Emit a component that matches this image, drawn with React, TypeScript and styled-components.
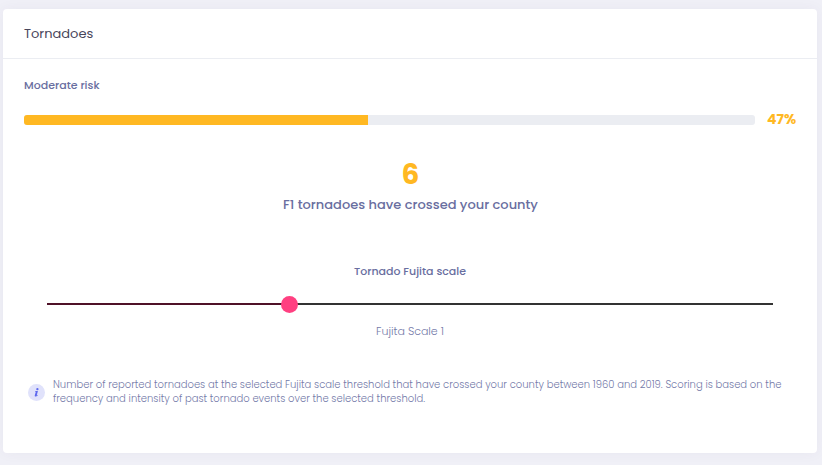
import React, { useState } from "react";
import styled, { createGlobalStyle } from "styled-components";

const GlobalStyle = createGlobalStyle`
  *, *::before, *::after { box-sizing: border-box; }
  body {
    margin: 0;
    background: #f0f0f7;
    font-family: Poppins, Inter, sans-serif;
    color: #696ea0;
  }
`;

const Page = styled.main`
  padding: 9px 5px 12px 3px;
`;

const Card = styled.section`
  background: #fff;
  border-radius: 4px;
  box-shadow: 0 0 13px rgba(82, 63, 105, 0.05);
`;

const CardHeader = styled.header`
  padding: 15px 21px 14px;
  border-bottom: 1px solid #ebedf2;
`;

const Title = styled.h2`
  margin: 0;
  font-size: 13px;
  line-height: 20px;
  font-weight: 400;
  color: #48465b;
`;

const CardBody = styled.div`
  padding: 16px 20px 47px 21px;
`;

const RiskLabel = styled.p`
  margin: 0 0 12px;
  font-size: 11px;
  line-height: 20px;
  font-weight: 500;
`;

const RiskRow = styled.div`
  display: flex;
  align-items: center;
  gap: 12px;
`;

const Meter = styled.div`
  flex: 1;
  height: 10px;
  border-radius: 3px;
  background: #ebedf2;
  overflow: hidden;
`;

const MeterFill = styled.div`
  height: 100%;
  background: #ffb822;
`;

const Percent = styled.span`
  width: 30px;
  padding-bottom: 2px;
  font-size: 14px;
  line-height: 24px;
  font-weight: 700;
  color: #ffb822;
`;

const Summary = styled.div`
  padding-top: 22px;
  text-align: center;
`;

const Count = styled.div`
  font-size: 28px;
  line-height: 40px;
  font-weight: 700;
  color: #ffb822;
`;

const CountCaption = styled.p`
  margin: 0;
  font-size: 13px;
  line-height: 20px;
  font-weight: 500;
`;

const ScaleGroup = styled.div`
  display: flex;
  flex-direction: column;
  padding: 46px 24px 0 23px;
  text-align: center;
`;

const ScaleLabel = styled.label`
  font-size: 11px;
  line-height: 20px;
  font-weight: 500;
`;

const Slider = styled.input<{ $filled: number }>`
  appearance: none;
  width: 100%;
  height: 18px;
  margin: 14px 0 8px;
  background: transparent;
  cursor: pointer;

  &::-webkit-slider-runnable-track {
    height: 2px;
    background: linear-gradient(
      to right,
      #4f1128 ${(p) => p.$filled}%,
      #333 ${(p) => p.$filled}%
    );
  }

  &::-webkit-slider-thumb {
    appearance: none;
    width: 17px;
    height: 17px;
    margin-top: -7px;
    border-radius: 50%;
    background: #ff4081;
  }
`;

const ScaleValue = styled.output`
  font-size: 11px;
  line-height: 20px;
  font-weight: 300;
  color: #747aa9;
`;

const Note = styled.div`
  display: flex;
  align-items: center;
  gap: 8px;
  padding: 37px 8px 0 4px;
`;

const InfoIcon = styled.svg`
  flex: none;
  width: 17px;
  height: 17px;
`;

const NoteText = styled.p`
  margin: 0;
  font-size: 10px;
  line-height: 14px;
  font-weight: 300;
  color: #747aa9;
`;

const RISK_PERCENT = 47;
const SCALE_STEP = 33;

export default function App() {
  const [position, setPosition] = useState(SCALE_STEP);
  const scale = position / SCALE_STEP;

  return (
    <>
      <GlobalStyle />
      <Page>
        <Card aria-labelledby="card-title">
          <CardHeader>
            <Title id="card-title">Tornadoes</Title>
          </CardHeader>
          <CardBody>
            <RiskLabel id="risk-label">Moderate risk</RiskLabel>
            <RiskRow>
              <Meter
                role="progressbar"
                aria-labelledby="risk-label"
                aria-valuemin={0}
                aria-valuemax={100}
                aria-valuenow={RISK_PERCENT}
              >
                <MeterFill style={{ width: `${RISK_PERCENT}%` }} />
              </Meter>
              <Percent>{RISK_PERCENT}%</Percent>
            </RiskRow>
            <Summary>
              <Count>6</Count>
              <CountCaption>F{scale} tornadoes have crossed your county</CountCaption>
            </Summary>
            <ScaleGroup>
              <ScaleLabel htmlFor="fujita">Tornado Fujita scale</ScaleLabel>
              <Slider
                id="fujita"
                type="range"
                min={0}
                max={100}
                step={SCALE_STEP}
                value={position}
                $filled={position}
                onChange={(e) => setPosition(Number(e.target.value))}
              />
              <ScaleValue htmlFor="fujita">Fujita Scale {scale}</ScaleValue>
            </ScaleGroup>
            <Note>
              <InfoIcon viewBox="0 0 17 17" aria-hidden="true">
                <circle cx="8.5" cy="8.5" r="8.5" fill="#e0e2fb" />
                <circle cx="9.4" cy="5.2" r="1.15" fill="#5d68ee" />
                <path
                  d="M7.2 7.1 9.9 6.9 8.7 11.4 9.7 10.8 9.9 11.2C9.1 12.1 8.3 12.6 7.6 12.6 6.8 12.6 6.6 12 6.8 11.3L7.8 7.7 7 7.6Z"
                  fill="#5d68ee"
                />
              </InfoIcon>
              <NoteText>
                Number of reported tornadoes at the selected Fujita scale threshold that have
                crossed your county between 1960 and 2019. Scoring is based on the frequency and
                intensity of past tornado events over the selected threshold.
              </NoteText>
            </Note>
          </CardBody>
        </Card>
      </Page>
    </>
  );
}
